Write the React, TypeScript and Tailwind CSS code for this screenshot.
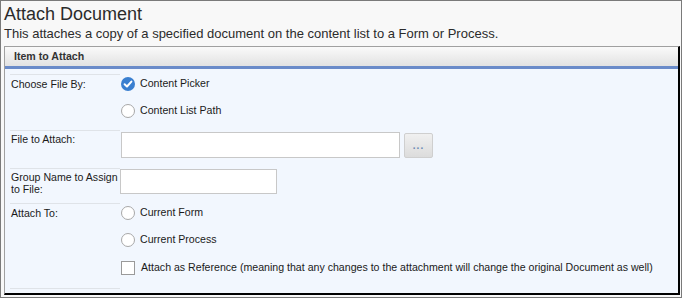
import React from 'react';

const Radio: React.FC<{ checked?: boolean; label: string }> = ({ checked, label }) => (
  <div className="flex items-center h-[18px]">
    {checked ? (
      <svg width="14" height="14" viewBox="0 0 14 14" className="shrink-0">
        <circle cx="7" cy="7" r="7" fill="#3a7fd0" />
        <path d="M3.6 7.2 L6 9.5 L10.4 4.6" fill="none" stroke="#fff" strokeWidth="2" strokeLinecap="round" strokeLinejoin="round" />
      </svg>
    ) : (
      <span className="block w-[14px] h-[14px] shrink-0 rounded-full border border-[#a8a8a8] bg-white" />
    )}
    <span className="ml-[5px] text-[10.6px] text-[#1a1a1a] whitespace-nowrap">{label}</span>
  </div>
);

const Label: React.FC<{ children: React.ReactNode }> = ({ children }) => (
  <div className="w-[110px] shrink-0 border-t border-[#dfe3e8] pl-[1px] text-[10.6px] leading-[14px] text-[#1a1a1a] whitespace-nowrap">
    {children}
  </div>
);

export default function App() {
  return (
    <div className="w-[682px] h-[298px] overflow-hidden border border-[#7a7a7a] bg-[#f8f8f8] font-['Liberation_Sans',Arial,sans-serif]">
      <div className="pl-[3px] pt-[1px]">
        <h1 className="text-[18px] leading-[24px] text-[#2b2b2b]">Attach Document</h1>
        <p className="text-[13px] leading-[16px] text-[#2b2b2b]">
          This attaches a copy of a specified document on the content list to a Form or Process.
        </p>
      </div>

      <div className="mt-[4px] ml-[3px] w-[676px] h-[249px] border-l border-t border-[#a0a0a0] border-r-2 border-b-2 border-r-black border-b-black bg-[#f2f7fe]">
        <div className="h-[19px] bg-gradient-to-b from-[#fafafa] to-[#e2e2e2] pl-[9px] text-[10.6px] leading-[19px] font-bold text-[#333]">
          Item to Attach
        </div>
        <div className="h-[3px] bg-[#6a8bc9]" />

        <div className="pl-[5px] pt-[5px]">
          {/* Choose File By */}
          <div className="flex">
            <Label><div className="pt-[2px]">Choose File By:</div></Label>
            <div className="pl-[1px] pt-[1px] pb-[10px] flex flex-col gap-[9px]">
              <Radio checked label="Content Picker" />
              <Radio label="Content List Path" />
            </div>
          </div>

          {/* File to Attach */}
          <div className="flex">
            <Label><div className="pt-[1px]">File to Attach:</div></Label>
            <div className="pl-[1px] pt-[2px] pb-[10px] flex items-start gap-[4px]">
              <div className="w-[279px] h-[26px] bg-white border border-[#c8c8c8]" />
              <div className="mt-[1px] w-[29px] h-[25px] bg-gradient-to-b from-[#f0f0f0] to-[#dcdcdc] border border-[#cfcfcf] rounded-[2px] flex items-center justify-center">
                <span className="text-[10px] leading-[10px] font-bold text-[#6b8ab5] tracking-[1px]">...</span>
              </div>
            </div>
          </div>

          {/* Group Name */}
          <div className="flex">
            <Label>
              <div className="pt-[2px] leading-[12px]">Group Name to Assign<br />to File:</div>
            </Label>
            <div className="pt-[1px] pb-[9px]">
              <div className="w-[157px] h-[25px] bg-white border border-[#c8c8c8]" />
            </div>
          </div>

          {/* Attach To */}
          <div className="flex">
            <Label><div className="pt-[2px]">Attach To:</div></Label>
            <div className="pl-[1px] pt-[1px] flex flex-col">
              <Radio label="Current Form" />
              <div className="mt-[9px]">
                <Radio label="Current Process" />
              </div>
              <div className="mt-[10px] h-[18px] flex items-center">
                <span className="block w-[14px] h-[14px] shrink-0 border border-[#9a9a9a] bg-white" />
                <span className="ml-[6px] text-[10.6px] text-[#1a1a1a] whitespace-nowrap">
                  Attach as Reference (meaning that any changes to the attachment will change the original Document as well)
                </span>
              </div>
            </div>
          </div>

          <div className="mt-[11px] w-[110px] border-t border-[#dfe3e8]" />
        </div>
      </div>
    </div>
  );
}
